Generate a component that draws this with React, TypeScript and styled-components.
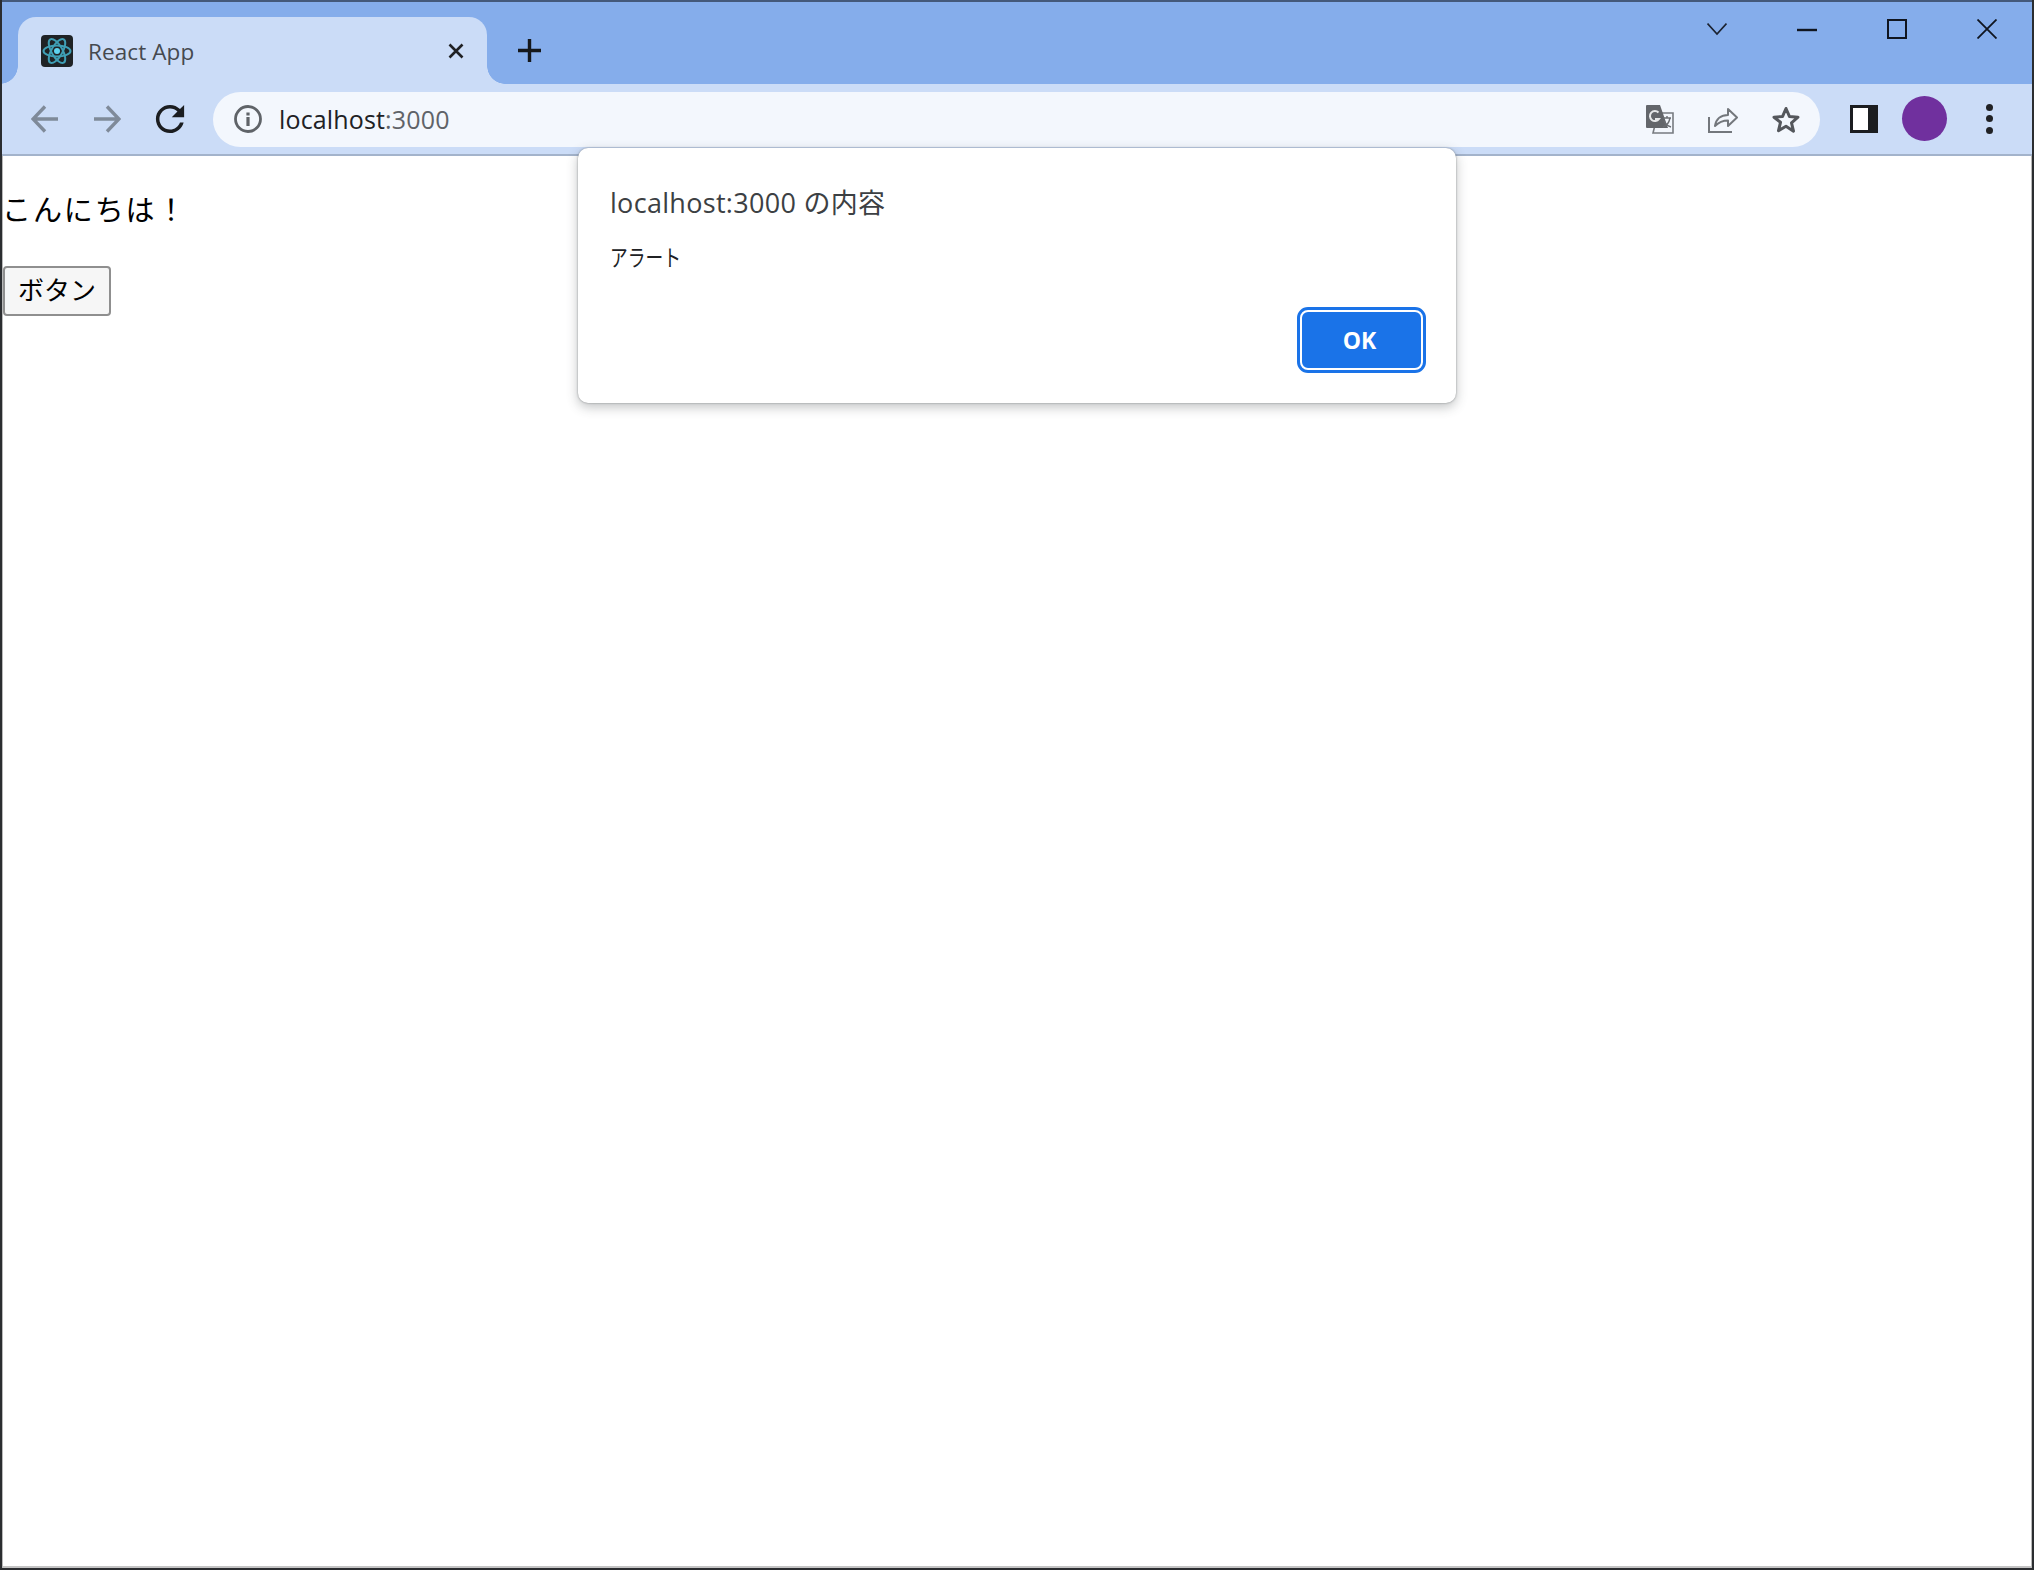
import styled, { createGlobalStyle } from "styled-components";

const GlobalStyle = createGlobalStyle`
  * {
    box-sizing: border-box;
  }
  html, body {
    margin: 0;
    padding: 0;
    background: #fff;
  }
`;

const Win = styled.div`
  position: relative;
  display: flex;
  flex-direction: column;
  height: 100vh;
  border-left: 2px solid #2b2d30;
  border-right: 2px solid #2b2d30;
  border-bottom: 2px solid #2b2d30;
  font-family: "Open Sans", "Noto Sans CJK JP", sans-serif;
  overflow: hidden;
`;

const TabStrip = styled.div`
  flex: none;
  display: flex;
  align-items: flex-end;
  height: 84px;
  padding-left: 16px;
  background: #85adeb;
  border-top: 2px solid #44597a;
`;

const Tab = styled.div`
  position: relative;
  display: flex;
  align-items: center;
  width: 469px;
  height: 67px;
  padding: 0 23px 0 23px;
  background: #cbdcf7;
  border-radius: 18px 18px 0 0;

  &::before,
  &::after {
    content: "";
    position: absolute;
    bottom: 0;
    width: 18px;
    height: 18px;
  }
  &::before {
    left: -18px;
    background: radial-gradient(circle at 0 0, #85adeb 17.5px, #cbdcf7 18px);
  }
  &::after {
    right: -18px;
    background: radial-gradient(circle at 100% 0, #85adeb 17.5px, #cbdcf7 18px);
  }
`;

const TabTitle = styled.span`
  margin-left: 15px;
  padding-top: 2px;
  flex: 1;
  font-size: 22.5px;
  letter-spacing: 0.1px;
  color: #45494f;
`;

const NewTab = styled.div`
  display: flex;
  margin: 0 0 22px 31px;
`;

const WindowControls = styled.div`
  display: flex;
  align-self: flex-start;
  gap: 70px;
  margin-left: auto;
  padding: 17px 35px 0 0;
`;

const Toolbar = styled.div`
  flex: none;
  display: flex;
  align-items: center;
  height: 72px;
  padding: 0 0 1px 29px;
  background: #cbdcf7;
  border-bottom: 2px solid #a3b3cb;
`;

const NavGroup = styled.div`
  display: flex;
  align-items: center;
  gap: 34px;
`;

const Omnibox = styled.div`
  flex: none;
  display: flex;
  align-items: center;
  width: 1607px;
  height: 55px;
  margin: 1px 0 0 28px;
  padding: 0 20px 0 21px;
  background: #f3f7fd;
  border-radius: 28px;
`;

const Url = styled.span`
  margin-left: 17px;
  font-size: 25px;
  letter-spacing: 0.15px;
  color: #202124;

  span {
    color: #5f6368;
  }
`;

const OmniActions = styled.div`
  display: flex;
  align-items: center;
  gap: 34px;
  margin-left: auto;
`;

const SidePanel = styled.div`
  display: flex;
  margin-left: 30px;
`;

const Avatar = styled.div`
  width: 45px;
  height: 45px;
  margin-left: 24px;
  border-radius: 50%;
  background: #70309e;
`;

const Dots = styled.div`
  display: flex;
  flex-direction: column;
  gap: 4.5px;
  margin-left: 39px;

  i {
    display: block;
    width: 7px;
    height: 7px;
    border-radius: 50%;
    background: #202124;
  }
`;

const Page = styled.div`
  flex: 1;
  padding: 0 1px;
  background: #fff;
  box-shadow: inset 1px 0 #b9b9b9, inset -1px 0 #b9b9b9, inset 0 -2px #c4c4c4;
`;

const Greeting = styled.p`
  margin: 0 0 0 -1px;
  padding-top: 32px;
  height: 110px;
  font-family: "Noto Sans CJK JP", sans-serif;
  font-size: 29px;
  line-height: 41px;
  letter-spacing: 1.9px;
  color: #000;
`;

const PageButton = styled.button`
  display: block;
  width: 108px;
  height: 50px;
  padding: 0 0 6px;
  background: #f6f6f6;
  border: 2px solid #8f8f8f;
  border-radius: 4px;
  font-family: "Noto Sans CJK JP", sans-serif;
  font-size: 26px;
  color: #000;
`;

const Dialog = styled.div`
  position: absolute;
  top: 148px;
  left: 576px;
  display: flex;
  flex-direction: column;
  width: 878px;
  height: 255px;
  padding: 35px 33px 33px 32px;
  background: #fff;
  border-radius: 10px;
  box-shadow: 0 0 2px rgba(60, 64, 67, 0.55), 0 4px 12px rgba(60, 64, 67, 0.32);
`;

const DialogTitle = styled.div`
  font-size: 27px;
  line-height: 40px;
  letter-spacing: 0.3px;
  color: #3c4043;
`;

const DialogMessage = styled.div`
  margin-top: 19px;
  font-size: 23px;
  line-height: 30px;
  color: #202124;
  transform: scaleX(0.77);
  transform-origin: left center;
`;

const OkButton = styled.button`
  align-self: flex-end;
  width: 123px;
  height: 60px;
  margin-top: auto;
  padding: 0 4px 0 0;
  background: #1a73e8;
  border: 2px solid #fff;
  outline: 3px solid #1a73e8;
  outline-offset: 0;
  border-radius: 8px;
  font-family: "Open Sans", sans-serif;
  font-weight: 700;
  font-size: 23px;
  color: #fff;
`;

function ReactIcon() {
  return (
    <svg width="32" height="32" viewBox="0 0 32 32" style={{ flex: "none" }}>
      <rect width="32" height="32" rx="4" fill="#1f2326" />
      <g fill="none" stroke="#3f9fb5" strokeWidth="2">
        <ellipse cx="16" cy="16" rx="13.5" ry="5.5" />
        <ellipse cx="16" cy="16" rx="13.5" ry="5.5" transform="rotate(60 16 16)" />
        <ellipse cx="16" cy="16" rx="13.5" ry="5.5" transform="rotate(120 16 16)" />
      </g>
      <circle cx="16" cy="16" r="3" fill="#5fd3ee" />
    </svg>
  );
}

function CloseSmall() {
  return (
    <svg width="16" height="16" viewBox="0 0 16 16" style={{ flex: "none" }}>
      <path d="M1.5 1.5l13 13M14.5 1.5l-13 13" stroke="#202124" strokeWidth="2.6" />
    </svg>
  );
}

function Plus() {
  return (
    <svg width="23" height="23" viewBox="0 0 23 23">
      <path d="M11.5 0v23M0 11.5h23" stroke="#15181c" strokeWidth="3.4" />
    </svg>
  );
}

function Chevron() {
  return (
    <svg width="20" height="20" viewBox="0 0 20 20">
      <path d="M0.5 4.5L10 15L19.5 4.5" fill="none" stroke="#1b2230" strokeWidth="1.7" />
    </svg>
  );
}

function Minimize() {
  return (
    <svg width="20" height="20" viewBox="0 0 20 20">
      <path d="M0 11h20" stroke="#10151f" strokeWidth="2.4" />
    </svg>
  );
}

function Maximize() {
  return (
    <svg width="20" height="20" viewBox="0 0 20 20">
      <rect x="1" y="1" width="18" height="18" fill="none" stroke="#10151f" strokeWidth="2" />
    </svg>
  );
}

function CloseWin() {
  return (
    <svg width="20" height="20" viewBox="0 0 20 20">
      <path d="M0.5 0.5l19 19M19.5 0.5l-19 19" stroke="#10151f" strokeWidth="1.8" />
    </svg>
  );
}

function BackArrow({ flip }: { flip?: boolean }) {
  return (
    <svg width="28" height="28" viewBox="0 0 28 28" style={flip ? { transform: "scaleX(-1)" } : undefined}>
      <path d="M27 14H3M14 1.5L2 14l12 12.5" fill="none" stroke="#7f8a99" strokeWidth="3.4" />
    </svg>
  );
}

function Reload() {
  return (
    <svg width="30" height="30" viewBox="3.5 3.5 17 17">
      <path
        fill="#1b1d20"
        d="M17.65 6.35C16.2 4.9 14.21 4 12 4c-4.42 0-7.99 3.58-7.99 8s3.57 8 7.99 8c3.73 0 6.84-2.55 7.73-6h-2.08c-.82 2.33-3.04 4-5.65 4-3.31 0-6-2.69-6-6s2.69-6 6-6c1.66 0 3.14.69 4.22 1.78L13 11h7V4l-2.35 2.35z"
      />
    </svg>
  );
}

function Info() {
  return (
    <svg width="28" height="28" viewBox="0 0 28 28" style={{ flex: "none" }}>
      <circle cx="14" cy="14" r="12.5" fill="none" stroke="#5f6368" strokeWidth="2.8" />
      <rect x="12.4" y="12" width="3.2" height="9" fill="#5f6368" />
      <rect x="12.4" y="7.5" width="3.2" height="3" fill="#5f6368" />
    </svg>
  );
}

function Translate() {
  return (
    <svg width="28" height="29" viewBox="0 0 28 29">
      <path d="M12 8h15v20H7z" fill="#f3f7fd" stroke="#777b80" strokeWidth="1.6" />
      <path d="M1 0h13l8 23H1a1 1 0 0 1-1-1V1a1 1 0 0 1 1-1z" fill="#63666b" />
      <path d="M12.5 7.5A5 5 0 1 0 13 14h-4" fill="none" stroke="#e6e8ea" strokeWidth="2" />
      <path d="M17 13h8M21 11v2M24 13c-1 5-4 8-7 9M18 16c1 3 4 5 7 6" fill="none" stroke="#6a6d72" strokeWidth="1.4" />
    </svg>
  );
}

function Share() {
  return (
    <svg width="30" height="27" viewBox="0 0 30 27">
      <path d="M1 11v15h22v-1" fill="none" stroke="#73777c" strokeWidth="2" />
      <path
        d="M7 20c1-7 6-11 13-11V3l9 8.5-9 8.5v-5.5c-5 0-9 1.5-13 5.5z"
        fill="none"
        stroke="#73777c"
        strokeWidth="2"
        strokeLinejoin="round"
      />
    </svg>
  );
}

function Star() {
  return (
    <svg width="28" height="27" viewBox="0 0 28 27">
      <path
        d="M14 2.5l3.4 7.9 8.6.8-6.5 5.6 2 8.4L14 20.3 6.5 24.7l2-8.4L2 11.2l8.6-.8z"
        fill="none"
        stroke="#54575c"
        strokeWidth="3"
        strokeLinejoin="round"
      />
    </svg>
  );
}

function Panel() {
  return (
    <svg width="28" height="28" viewBox="0 0 28 28">
      <rect x="1.5" y="1.5" width="25" height="25" fill="#fff" stroke="#1b1d20" strokeWidth="3" />
      <rect x="18" y="1" width="10" height="26" fill="#1b1d20" />
    </svg>
  );
}

export default function App() {
  return (
    <>
      <GlobalStyle />
      <Win>
        <TabStrip>
          <Tab>
            <ReactIcon />
            <TabTitle>React App</TabTitle>
            <CloseSmall />
          </Tab>
          <NewTab>
            <Plus />
          </NewTab>
          <WindowControls>
            <Chevron />
            <Minimize />
            <Maximize />
            <CloseWin />
          </WindowControls>
        </TabStrip>
        <Toolbar>
          <NavGroup>
            <BackArrow />
            <BackArrow flip />
            <Reload />
          </NavGroup>
          <Omnibox>
            <Info />
            <Url>
              localhost<span>:3000</span>
            </Url>
            <OmniActions>
              <Translate />
              <Share />
              <Star />
            </OmniActions>
          </Omnibox>
          <SidePanel>
            <Panel />
          </SidePanel>
          <Avatar />
          <Dots>
            <i />
            <i />
            <i />
          </Dots>
        </Toolbar>
        <Page>
          <Greeting>こんにちは！</Greeting>
          <PageButton>ボタン</PageButton>
        </Page>
        <Dialog>
          <DialogTitle>localhost:3000 の内容</DialogTitle>
          <DialogMessage>アラート</DialogMessage>
          <OkButton>OK</OkButton>
        </Dialog>
      </Win>
    </>
  );
}
